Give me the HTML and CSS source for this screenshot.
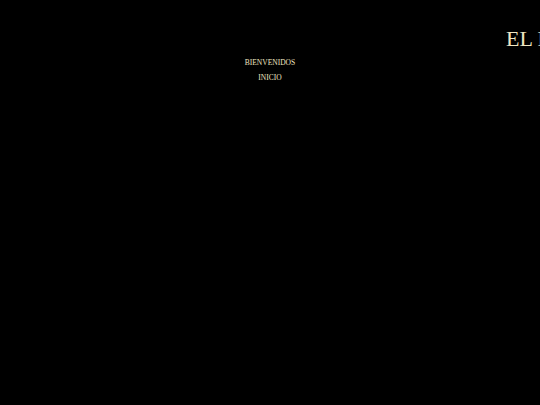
FILE: index.html
```html
<!DOCTYPE html>
<html lang="es">
<head>
<meta charset="utf-8">
<title>Bienvenidos</title>
<link rel="stylesheet" href="styles.css">
</head>
<body>
<header class="top">
  <h1 class="title">EL RINCÓN</h1>
</header>
<main class="content">
  <p class="welcome">BIENVENIDOS</p>
  <nav class="menu"><a class="link" href="#">INICIO</a></nav>
</main>
</body>
</html>
```

FILE: styles.css
```css
html, body {
  margin: 0;
  padding: 0;
  background: #000;
  height: 100%;
  overflow: hidden;
}
body {
  font-family: "Liberation Serif", "Times New Roman", serif;
  color: #efe5c2;
}
.top {
  display: flex;
  padding: 26px 0 0 506px;
  white-space: nowrap;
  overflow: hidden;
}
.title {
  margin: 0;
  font-size: 22px;
  font-weight: normal;
  line-height: 26px;
}
.content {
  display: flex;
  flex-direction: column;
  align-items: center;
}
.welcome {
  margin: 6px 0 0;
  font-size: 7.5px;
  line-height: 10px;
}
.menu {
  margin-top: 5px;
  font-size: 7.5px;
  line-height: 10px;
}
.link {
  color: #efe5c2;
  text-decoration: none;
}
```
